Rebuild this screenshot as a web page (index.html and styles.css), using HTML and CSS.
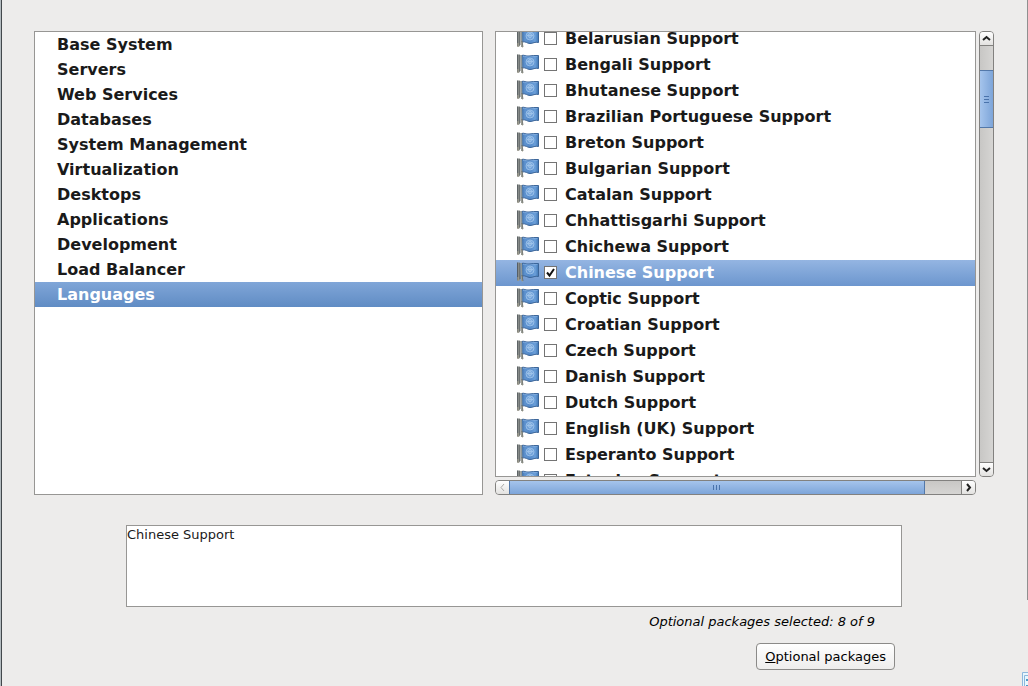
FILE: index.html
```
<!DOCTYPE html>
<html lang="en">
<head>
<meta charset="utf-8">
<title>Package selection</title>
<link rel="stylesheet" href="styles.css">
</head>
<body>
<svg class="defs" aria-hidden="true">
  <defs>
    <linearGradient id="cloth" x1="0" x2="1" y1="0" y2="0">
      <stop offset="0" stop-color="#3c6ca5"/><stop offset=".2" stop-color="#5f93cf"/><stop offset=".5" stop-color="#5389c9"/><stop offset=".8" stop-color="#6b9fd9"/><stop offset="1" stop-color="#4077b5"/>
    </linearGradient>
    <symbol id="flag" viewBox="0 0 22 22">
      <path d="M4.500 2.500C7 1.500 9 3.500 12 3S18 2.500 21.500 2.500V15.500C18 14.500 16 16.500 13 16.500S9 14 4.500 15Z" fill="url(#cloth)" stroke="#3a6498"/>
      <path d="M6 3.500C8 2.500 10 4.500 13 4S18 3.500 20.500 3.500" fill="none" stroke="#8fb8e6" opacity=".6"/>
      <circle cx="13" cy="9" r="4" fill="#86b2e3" opacity=".5"/>
      <g fill="none" stroke="#a9cbee" stroke-width=".7"><circle cx="13" cy="9" r="4"/><circle cx="13" cy="8.500" r="2"/><path d="M10 8.500h6M13 5.500v6"/></g>
      <path d="M.5 1.500H3V19L1 20Z" fill="#868a88"/>
      <path d="M.5 1.500V19.500M3 2V18" stroke="#50575a" fill="none" stroke-width=".9"/>
      <path d="M3.500 2H5L5.500 20H4Z" fill="#8f9898"/>
      <path d="M1 16V20M4.500 15L5.500 20.500" stroke="#aaa592" fill="none"/>
      <path d="M5 14L6 20" stroke="#565c5c" stroke-width=".7" fill="none"/>
    </symbol>
  </defs>
</svg>
<main class="window">
  <div class="panels">
    <ul class="categories" aria-label="Categories">
      <li><button class="category">Base System</button></li>
      <li><button class="category">Servers</button></li>
      <li><button class="category">Web Services</button></li>
      <li><button class="category">Databases</button></li>
      <li><button class="category">System Management</button></li>
      <li><button class="category">Virtualization</button></li>
      <li><button class="category">Desktops</button></li>
      <li><button class="category">Applications</button></li>
      <li><button class="category">Development</button></li>
      <li><button class="category">Load Balancer</button></li>
      <li><button class="category selected" aria-current="true">Languages</button></li>
    </ul>
    <section class="groups" aria-label="Package groups">
      <div class="viewport">
        <div class="rows">
          <label class="row"><svg class="flag"><use href="#flag"/></svg><input class="check" type="checkbox">Belarusian Support</label>
          <label class="row"><svg class="flag"><use href="#flag"/></svg><input class="check" type="checkbox">Bengali Support</label>
          <label class="row"><svg class="flag"><use href="#flag"/></svg><input class="check" type="checkbox">Bhutanese Support</label>
          <label class="row"><svg class="flag"><use href="#flag"/></svg><input class="check" type="checkbox">Brazilian Portuguese Support</label>
          <label class="row"><svg class="flag"><use href="#flag"/></svg><input class="check" type="checkbox">Breton Support</label>
          <label class="row"><svg class="flag"><use href="#flag"/></svg><input class="check" type="checkbox">Bulgarian Support</label>
          <label class="row"><svg class="flag"><use href="#flag"/></svg><input class="check" type="checkbox">Catalan Support</label>
          <label class="row"><svg class="flag"><use href="#flag"/></svg><input class="check" type="checkbox">Chhattisgarhi Support</label>
          <label class="row"><svg class="flag"><use href="#flag"/></svg><input class="check" type="checkbox">Chichewa Support</label>
          <label class="row active"><svg class="flag"><use href="#flag"/></svg><input class="check" type="checkbox" checked>Chinese Support</label>
          <label class="row"><svg class="flag"><use href="#flag"/></svg><input class="check" type="checkbox">Coptic Support</label>
          <label class="row"><svg class="flag"><use href="#flag"/></svg><input class="check" type="checkbox">Croatian Support</label>
          <label class="row"><svg class="flag"><use href="#flag"/></svg><input class="check" type="checkbox">Czech Support</label>
          <label class="row"><svg class="flag"><use href="#flag"/></svg><input class="check" type="checkbox">Danish Support</label>
          <label class="row"><svg class="flag"><use href="#flag"/></svg><input class="check" type="checkbox">Dutch Support</label>
          <label class="row"><svg class="flag"><use href="#flag"/></svg><input class="check" type="checkbox">English (UK) Support</label>
          <label class="row"><svg class="flag"><use href="#flag"/></svg><input class="check" type="checkbox">Esperanto Support</label>
          <label class="row"><svg class="flag"><use href="#flag"/></svg><input class="check" type="checkbox">Estonian Support</label>
        </div>
      </div>
      <div class="scroll vertical">
        <button class="arrow" aria-label="Scroll up"><svg width="9" height="9" viewBox="0 0 9 9"><path d="M1 6L4.500 3L8 6"/></svg></button>
        <div class="track"><div class="thumb"><i></i><i></i><i></i></div></div>
        <button class="arrow" aria-label="Scroll down"><svg width="9" height="9" viewBox="0 0 9 9"><path d="M1 3L4.500 6L8 3"/></svg></button>
      </div>
      <div class="scroll horizontal">
        <button class="arrow" aria-label="Scroll left" disabled><svg width="9" height="9" viewBox="0 0 9 9"><path d="M6 1L3 4.500L6 8"/></svg></button>
        <div class="track"><div class="thumb"><i></i><i></i><i></i></div></div>
        <button class="arrow" aria-label="Scroll right"><svg width="9" height="9" viewBox="0 0 9 9"><path d="M3 1L6 4.500L3 8"/></svg></button>
      </div>
    </section>
  </div>
  <div class="details">
    <textarea class="description" aria-label="Description" readonly>Chinese Support</textarea>
    <p class="status">Optional packages selected: 8 of 9</p>
    <button class="optional"><u>O</u>ptional packages</button>
  </div>
  <div class="edge"></div>
  <svg class="corner" width="6" height="14" viewBox="0 0 6 14"><path d="M0 0H6V14H0Z" fill="#e8f7fd"/><path d="M.5 14V.5H6M2.500 14V3.500H6" fill="none" stroke="#8db8dc"/><path d="M4 7H6V9H4ZM4 13H6V14H4Z" fill="#4b9ac6"/></svg>
</main>
</body>
</html>
```
FILE: styles.css
```
* { box-sizing: border-box; }

body {
  margin: 0;
  background: #edeceb;
  color: #1a1a1a;
  font-family: "DejaVu Sans", sans-serif;
  font-size: 13px;
}

button { font: inherit; color: inherit; }

.defs { position: absolute; width: 0; height: 0; }

.window {
  position: relative;
  display: flex;
  flex-direction: column;
  min-height: 100vh;
  padding: 31px 34px 16px 33px;
  border-left: 1px solid #b4bcc0;
  box-shadow: inset 1px 0 #43484c;
}

.panels {
  flex: 1;
  display: grid;
  grid-template-columns: 449fr 499fr;
  gap: 12px;
}

.categories {
  margin: 0;
  padding: 0;
  list-style: none;
  background: #fff;
  border: 1px solid #979694;
}

.category {
  display: block;
  width: 100%;
  height: 25px;
  padding: 0 22px;
  border: 0;
  background: none;
  text-align: left;
}

.category, .row {
  font-size: 16px;
  font-weight: bold;
  line-height: 25px;
}

.category.selected {
  color: #fff;
  background: linear-gradient(#80a6d8, #608cc4);
}

.groups {
  display: grid;
  grid-template-columns: 1fr 15px;
  grid-template-rows: 1fr 15px;
  gap: 3px;
}

.viewport {
  height: 446px;
  min-height: 100%;
  overflow: hidden;
  background: #fff;
  border: 1px solid #979694;
}

.rows { margin-top: -6px; }

.row {
  display: flex;
  align-items: center;
  height: 26px;
  padding: 0 0 2px 21px;
  white-space: nowrap;
}

.row.active {
  color: #fff;
  background: linear-gradient(#94b5e2, #6c96ce);
}

.flag { width: 22px; height: 22px; margin-right: 5px; }

.check {
  appearance: none;
  width: 13px;
  height: 13px;
  margin: 0 8px 0 0;
  border: 1px solid #747474;
  background: #fff;
}

.check:checked {
  background: #fff url("data:image/svg+xml,%3Csvg xmlns='http://www.w3.org/2000/svg' viewBox='0 0 11 11'%3E%3Cpath d='M2 5.500L4.500 8.500L9 2' fill='none' stroke='%23111' stroke-width='2'/%3E%3C/svg%3E") center / 11px 11px no-repeat;
}

.scroll {
  display: flex;
  border: 1px solid #82817f;
  border-radius: 4px;
  overflow: hidden;
}

.vertical { flex-direction: column; background: linear-gradient(90deg, #c8c7c5, #d6d5d3); }
.horizontal { background: linear-gradient(#c8c7c5, #d6d5d3); }

.arrow {
  display: flex;
  align-items: center;
  justify-content: center;
  flex: 0 0 13px;
  padding: 0;
  border: 0;
  background: linear-gradient(#fff, #e3e2e0);
}

.arrow path { fill: none; stroke: #222; stroke-width: 2; }
.arrow:disabled path { stroke: #aaa9a7; stroke-width: 1; }

.track { flex: 1; display: flex; }
.vertical .track { flex-direction: column; border: solid #82817f; border-width: 1px 0; }
.horizontal .track { border-right: 1px solid #82817f; }

.thumb {
  display: flex;
  align-items: center;
  justify-content: center;
  gap: 2px;
}

.thumb i { background: #4a73ab; }

.vertical .thumb {
  flex-direction: column;
  height: 14%;
  margin: 24px -1px 0;
  border: 1px solid #5378a9;
  background: linear-gradient(90deg, #a5c4ec, #7da5d9);
}

.vertical .thumb i { width: 5px; height: 1px; }

.horizontal .thumb {
  width: 92%;
  margin: -1px 0;
  border: 1px solid #5378a9;
  background: linear-gradient(#a5c4ec, #7da5d9);
}

.horizontal .thumb i { width: 1px; height: 5px; }

.details {
  display: flex;
  flex-direction: column;
  align-items: flex-end;
  padding: 30px 92px 0;
}

.description {
  width: 100%;
  height: 82px;
  padding: 0;
  border: 1px solid #979694;
  outline: 0;
  resize: none;
  background: #fff;
  color: #1a1a1a;
  font: inherit;
  line-height: 17px;
}

.status {
  margin: 6px 27px 13px 0;
  color: #000;
  font-style: italic;
  line-height: 17px;
}

.optional {
  height: 27px;
  margin-right: 7px;
  padding: 0 8px;
  border: 1px solid #8b8a88;
  border-radius: 4px;
  background: linear-gradient(#fff, #eeedec);
  color: #000;
}

.edge {
  position: absolute;
  top: 0;
  right: 0;
  width: 1px;
  height: 600px;
  background: #8f8f8f;
}

.corner { position: absolute; right: 0; bottom: 0; }
```
